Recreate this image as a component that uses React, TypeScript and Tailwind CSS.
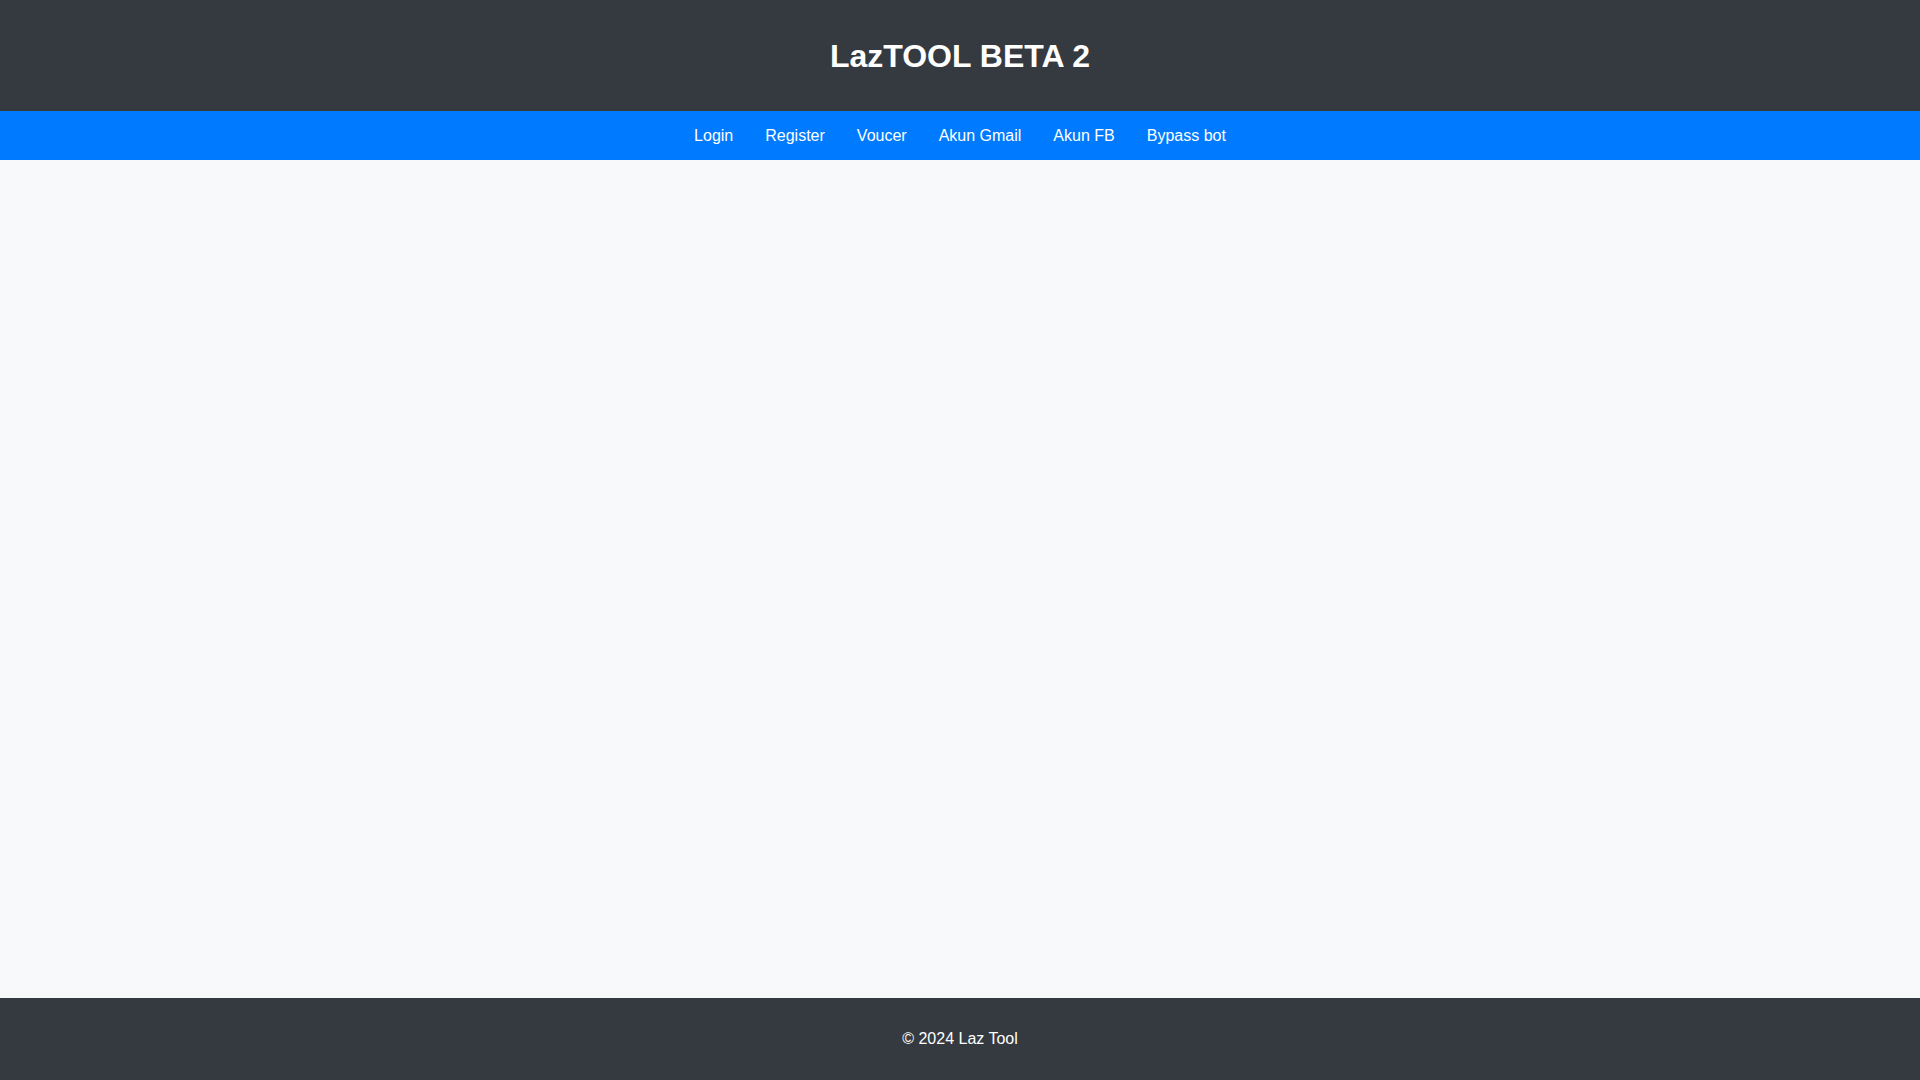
export default function App() {
  const links = ["Login", "Register", "Voucer", "Akun Gmail", "Akun FB", "Bypass bot"];
  return (
    <div className="flex flex-col min-h-screen bg-[#f8f9fa]" style={{ fontFamily: '"Liberation Sans", Arial, sans-serif' }}>
      <header className="bg-[#343a40] text-white h-[111px] flex items-center justify-center">
        <h1 className="text-[32px] font-bold leading-none">LazTOOL BETA 2</h1>
      </header>
      <nav className="bg-[#007bff] h-[49px] flex items-center justify-center">
        {links.map((l) => (
          <a key={l} className="text-white text-[16px] px-4">{l}</a>
        ))}
      </nav>
      <main className="flex-1" />
      <footer className="bg-[#343a40] text-white h-[82px] flex items-center justify-center text-[16px]">
        © 2024 Laz Tool
      </footer>
    </div>
  );
}
